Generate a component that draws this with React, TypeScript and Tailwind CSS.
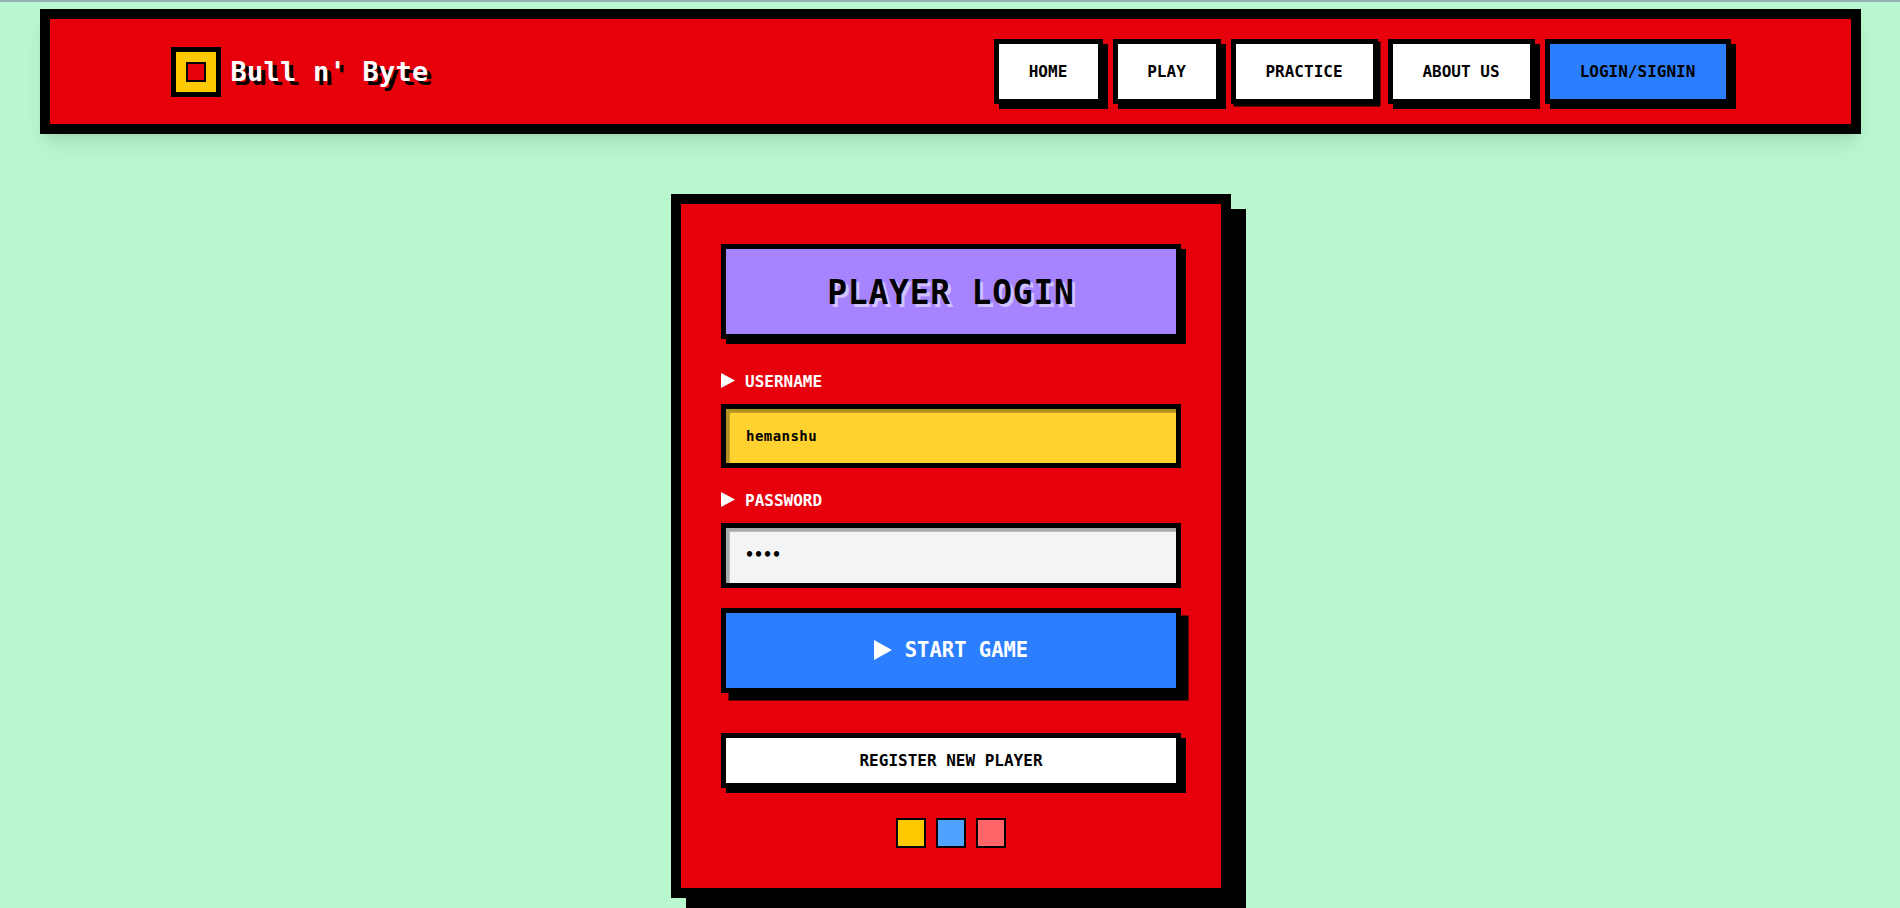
import type { ReactNode } from "react";

type NavItem = { label: string; className: string };

const navItems: NavItem[] = [
  { label: "HOME", className: "w-[109px] bg-white shadow-[5px_5px_0_#000]" },
  { label: "PLAY", className: "w-[108px] bg-white shadow-[5px_5px_0_#000]" },
  { label: "PRACTICE", className: "w-[147px] bg-white shadow-[2.5px_2.5px_0_#000]" },
  { label: "ABOUT US", className: "w-[147px] bg-white shadow-[5px_5px_0_#000]" },
  { label: "LOGIN/SIGNIN", className: "w-[186px] bg-[#2b7fff] shadow-[5px_5px_0_#000]" },
];

function Triangle({ className }: { className: string }) {
  return (
    <svg viewBox="0 0 14 15" preserveAspectRatio="none" className={className} aria-hidden="true">
      <path d="M0 0L14 7.5L0 15Z" fill="currentColor" />
    </svg>
  );
}

function FieldLabel({ htmlFor, children }: { htmlFor: string; children: ReactNode }) {
  return (
    <label htmlFor={htmlFor} className="flex h-[25px] items-center text-[16px] leading-6 text-white">
      <Triangle className="mr-[10px] mb-[2px] h-[15px] w-[14px]" />
      <span className="pt-px">{children}</span>
    </label>
  );
}

export default function App() {
  return (
    <div className="h-screen overflow-hidden border-t-2 border-[#94b0b6] bg-[#b9f8cf] pt-[7px] font-['DejaVu_Sans_Mono',monospace] font-bold text-black">
      <header className="mx-auto flex h-[125px] w-[1821px] items-center border-[10px] border-black bg-[#e7000b] pr-[120px] pl-[121px] shadow-[0_12.5px_18.75px_-3.75px_rgba(0,0,0,0.1),0_5px_7.5px_-5px_rgba(0,0,0,0.1)]">
        <div className="flex items-center gap-[10px]">
          <div className="flex size-[50px] items-center justify-center border-[5px] border-black bg-[#fcc800]">
            <div className="size-5 border-2 border-black bg-[#e7000b]" />
          </div>
          <span className="text-[27px] leading-[38px] tracking-[0.25px] whitespace-pre text-white [text-shadow:4px_4px_0_#000]">
            Bull n' Byte
          </span>
        </div>
        <nav className="ml-auto flex gap-[10px]">
          {navItems.map((item) => (
            <a
              key={item.label}
              href="#"
              className={`flex h-[65px] items-center justify-center border-[5px] border-black pt-px text-[16px] whitespace-pre ${item.className}`}
            >
              {item.label}
            </a>
          ))}
        </nav>
      </header>

      <main className="mt-[60px] flex justify-center pl-[2px]">
        <form className="h-[704px] w-[560px] border-[10px] border-black bg-[#e7000b] p-10 shadow-[15px_15px_0_#000]">
          <h1 className="flex h-[95px] items-center justify-center border-[5px] border-black bg-[#a684ff] pt-[2px] text-[33px] tracking-[0.76px] shadow-[5px_5px_0_#000] [text-shadow:3px_3px_0_rgba(255,255,255,0.5)]">
            PLAYER LOGIN
          </h1>

          <div className="mt-[30px]">
            <FieldLabel htmlFor="username">USERNAME</FieldLabel>
            <input
              id="username"
              defaultValue="hemanshu"
              className="mt-[10px] block h-16 w-full border-[5px] border-black bg-[#ffd230] px-5 pb-px text-[14px] tracking-[0.45px] shadow-[inset_3.75px_3.75px_0_rgba(0,0,0,0.3)] outline-none"
            />
          </div>

          <div className="mt-5">
            <FieldLabel htmlFor="password">PASSWORD</FieldLabel>
            <input
              id="password"
              type="password"
              defaultValue="1234"
              className="mt-[10px] block h-[65px] w-full border-[5px] border-black bg-[#f3f4f6] pr-5 pb-px pl-[19px] text-[15px] shadow-[inset_3.75px_3.75px_0_rgba(0,0,0,0.3)] outline-none"
            />
          </div>

          <button
            type="button"
            className="mt-5 flex h-[85px] w-full items-center justify-center border-[5px] border-black bg-[#2b7fff] text-[20.5px] text-white shadow-[7.5px_7.5px_0_#000]"
          >
            <Triangle className="mr-[13px] mb-[2px] h-5 w-[18px]" />
            START GAME
          </button>

          <button
            type="button"
            className="mt-10 flex h-[55px] w-full items-center justify-center border-[5px] border-black bg-white text-[16px] shadow-[5px_5px_0_#000]"
          >
            REGISTER NEW PLAYER
          </button>

          <div className="mt-[30px] flex justify-center gap-[10px]">
            <div className="size-[30px] border-2 border-black bg-[#fcc800]" />
            <div className="size-[30px] border-2 border-black bg-[#50a2ff]" />
            <div className="size-[30px] border-2 border-black bg-[#ff6467]" />
          </div>
        </form>
      </main>
    </div>
  );
}
